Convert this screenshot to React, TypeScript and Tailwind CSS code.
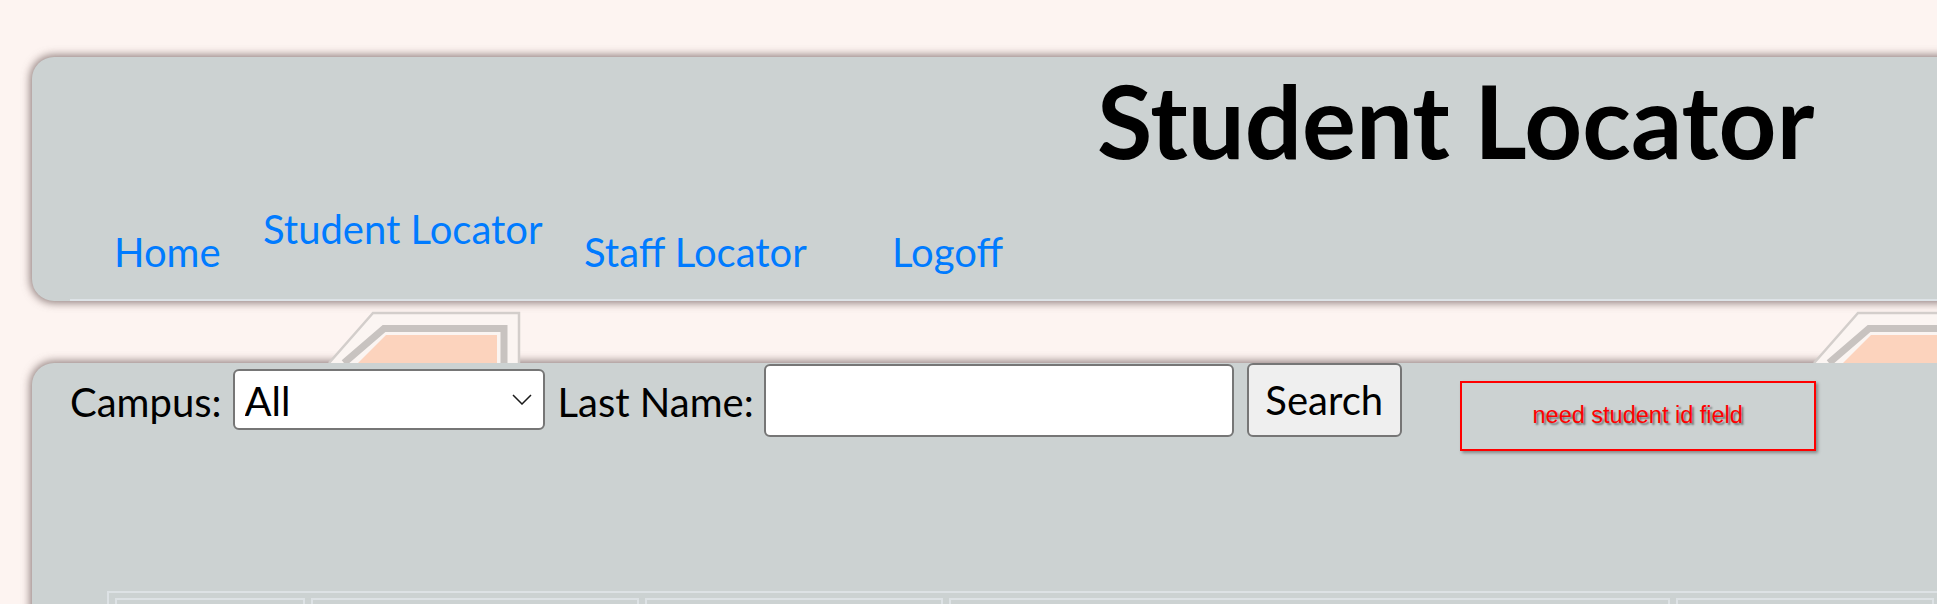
import React from 'react';

const NAV = [
  { label: 'Home', w: 'w-[149px]', raised: false },
  { label: 'Student Locator', w: 'w-[321px]', raised: true },
  { label: 'Staff Locator', w: 'w-[308px]', raised: false },
  { label: 'Logoff', w: 'w-[200px]', raised: false },
];

// folder-tab shaped decoration peeking out between the two panels
function TabShape({ className }: { className?: string }) {
  return (
    <svg className={className} width="200" height="52" viewBox="0 0 200 52">
      <path d="M1 52 L45 2 L191 2 L191 52" fill="#fbf5f2" stroke="#d3cecb" strokeWidth="2.5" />
      <path d="M16 52 L56 17.5 L176 17.5 L176 52" fill="none" stroke="#c8c3c0" strokeWidth="7" />
      <path d="M30 52 L58 24 L169 24 L169 52 Z" fill="#fcd3bd" />
    </svg>
  );
}

export default function App() {
  return (
    <div className="w-[1937px] h-[604px] overflow-hidden bg-[#fdf4f1] pt-[57px] font-['Lato',sans-serif] text-black">
      {/* header panel */}
      <header className="ml-[32px] w-[1940px] h-[244px] rounded-[22px] bg-[#ccd2d2] shadow-[0_0_9px_2px_rgba(110,90,88,0.75)] flex flex-col">
        <h1 className="pl-[1065px] pt-[13px] h-[113px] text-[101px] leading-none font-bold">Student Locator</h1>
        <nav className="mt-[39px] pl-[82px] flex items-end">
          {NAV.map((n) => (
            <a
              key={n.label}
              href="#"
              className={`${n.w} text-[40px] leading-none text-[#007bff] ${n.raised ? 'mb-[23px]' : ''}`}
            >
              {n.label}
            </a>
          ))}
        </nav>
        <div className="mt-auto ml-[38px] h-[2px] bg-[#dde3e7]" />
      </header>

      {/* gap with background tabs */}
      <div className="h-[62px] flex items-end">
        <TabShape className="shrink-0 ml-[328px]" />
        <TabShape className="shrink-0 ml-[1285px]" />
      </div>

      {/* main panel */}
      <main className="ml-[32px] w-[1940px] h-[300px] rounded-[22px] bg-[#ccd2d2] shadow-[0_0_9px_2px_rgba(110,90,88,0.75)]">
        <div className="pl-[38px] flex items-start text-[40px]">
          <label className="mt-[2px] leading-[74px]">Campus:</label>
          <div className="relative ml-[11px] mt-[6px]">
            <select className="appearance-none w-[312px] h-[61px] pl-[10px] pt-[3px] bg-white border-2 border-[#767676] rounded-[6px] leading-none">
              <option>All</option>
            </select>
            <svg className="absolute right-[13px] top-[25px] pointer-events-none" width="20" height="11" viewBox="0 0 20 11">
              <path d="M1 1 L10 10 L19 1" fill="none" stroke="#1a1a1a" strokeWidth="1.5" />
            </svg>
          </div>
          <label className="ml-[13px] mt-[2px] leading-[74px]">Last Name:</label>
          <input type="text" className="ml-[10px] mt-[1px] w-[470px] h-[73px] bg-white border-2 border-[#767676] rounded-[6px] px-2" />
          <button className="ml-[13px] w-[155px] h-[74px] bg-[#efefef] border-2 border-[#767676] rounded-[6px] leading-none">
            Search
          </button>
          <div className="ml-[58px] mt-[18px] w-[356px] h-[70px] border-2 border-[#ff0000] shadow-[2px_2px_3px_rgba(0,0,0,0.35)] flex items-center justify-center">
            <span className="font-['Liberation_Sans',Arial,sans-serif] text-[23.5px] text-[#ff0000] [text-shadow:2px_2px_2px_rgba(0,0,0,0.45)]">
              need student id field
            </span>
          </div>
        </div>

        <table className="mt-[140px] ml-[75px] table-fixed border-separate border-spacing-x-[6px] border-spacing-y-[5px] border-2 border-[#dde2e5]">
          <tbody>
            <tr>
              <td className="w-[190px] h-[60px] border-2 border-[#dde2e5]" />
              <td className="w-[328px] h-[60px] border-2 border-[#dde2e5]" />
              <td className="w-[298px] h-[60px] border-2 border-[#dde2e5]" />
              <td className="w-[721px] h-[60px] border-2 border-[#dde2e5]" />
              <td className="w-[258px] h-[60px] border-2 border-[#dde2e5]" />
            </tr>
          </tbody>
        </table>
      </main>
    </div>
  );
}
